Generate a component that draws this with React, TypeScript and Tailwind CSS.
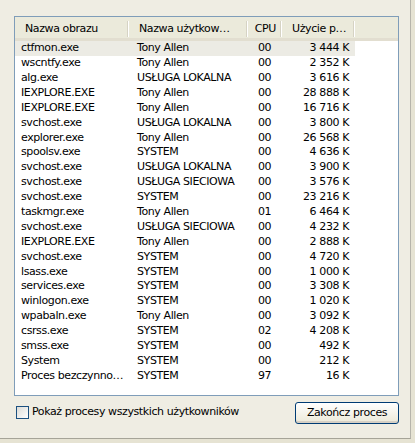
const rows: [string, string, string, string][] = [
  ['ctfmon.exe', 'Tony Allen', '00', '3 444 K'],
  ['wscntfy.exe', 'Tony Allen', '00', '2 352 K'],
  ['alg.exe', 'USŁUGA LOKALNA', '00', '3 616 K'],
  ['IEXPLORE.EXE', 'Tony Allen', '00', '28 888 K'],
  ['IEXPLORE.EXE', 'Tony Allen', '00', '16 716 K'],
  ['svchost.exe', 'USŁUGA LOKALNA', '00', '3 800 K'],
  ['explorer.exe', 'Tony Allen', '00', '26 568 K'],
  ['spoolsv.exe', 'SYSTEM', '00', '4 636 K'],
  ['svchost.exe', 'USŁUGA LOKALNA', '00', '3 900 K'],
  ['svchost.exe', 'USŁUGA SIECIOWA', '00', '3 576 K'],
  ['svchost.exe', 'SYSTEM', '00', '23 216 K'],
  ['taskmgr.exe', 'Tony Allen', '01', '6 464 K'],
  ['svchost.exe', 'USŁUGA SIECIOWA', '00', '4 232 K'],
  ['IEXPLORE.EXE', 'Tony Allen', '00', '2 888 K'],
  ['svchost.exe', 'SYSTEM', '00', '4 720 K'],
  ['lsass.exe', 'SYSTEM', '00', '1 000 K'],
  ['services.exe', 'SYSTEM', '00', '3 308 K'],
  ['winlogon.exe', 'SYSTEM', '00', '1 020 K'],
  ['wpabaln.exe', 'Tony Allen', '00', '3 092 K'],
  ['csrss.exe', 'SYSTEM', '02', '4 208 K'],
  ['smss.exe', 'SYSTEM', '00', '492 K'],
  ['System', 'SYSTEM', '00', '212 K'],
  ['Proces bezczynno…', 'SYSTEM', '97', '16 K'],
]

// Column widths shared by header and rows
const cols = ['w-[114px]', 'w-[119px]', 'w-[34px]', 'w-[73px]']

function HeaderCell({ label, width, align = 'left' }: { label: string; width: string; align?: 'left' | 'right' }) {
  return (
    <div className={`${width} relative flex h-full shrink-0 items-center pt-[3px]`}>
      <span className={`flex-1 truncate ${align === 'right' ? 'pr-[6px] text-right' : 'pl-[10px]'}`}>{label}</span>
      <div className="absolute right-0 top-[4px] h-[16px] w-[2px] border-l border-r border-l-[#d6d3c4] border-r-white" />
    </div>
  )
}

export default function App() {
  return (
    <div
      className="h-[443px] w-[415px] overflow-hidden bg-[#e6e3d3] text-[11px] text-black"
      style={{ fontFamily: '"DejaVu Sans", Verdana, sans-serif' }}
    >
      <div className="flex h-[439px] w-[411px] flex-col border-b border-r border-b-[#a6a498] border-r-[#b6b4aa] bg-[#efede3] pl-[14px] pt-[16px]">
        {/* Process list */}
        <div className="flex h-[380px] w-[385px] flex-col border border-[#7f9db9] bg-white">
          <div className="flex h-[24px] shrink-0 border-b-[3px] border-b-[#e2ded0] bg-[#ebeadb] tracking-[-0.4px]">
            <HeaderCell label="Nazwa obrazu" width={cols[0]} />
            <HeaderCell label="Nazwa użytkow…" width={cols[1]} />
            <HeaderCell label="CPU" width={cols[2]} align="right" />
            <HeaderCell label="Użycie p…" width={cols[3]} />
          </div>
          <div className="flex flex-col tracking-[-0.4px]">
            {rows.map(([name, user, cpu, mem], i) => (
              <div key={i} className={`flex h-[14.9px] w-[340px] items-center ${i === 0 ? 'bg-[#ecebe4]' : ''}`}>
                <span className={`${cols[0]} truncate pl-[6px]`}>{name}</span>
                <span className={`${cols[1]} truncate pl-[8px]`}>{user}</span>
                <span className={`${cols[2]} pl-[10px]`}>{cpu}</span>
                <span className={`${cols[3]} pr-[6px] text-right`}>{mem}</span>
              </div>
            ))}
          </div>
        </div>

        {/* Footer */}
        <div className="mt-[6px] flex w-[385px] items-start justify-between">
          <label className="mt-[2px] flex items-center gap-[3px] tracking-[-0.4px]">
            <span className="ml-[2px] h-[13px] w-[13px] border border-[#1c5180] bg-gradient-to-br from-[#dcdcd7] to-white" />
            <span>Pokaż procesy wszystkich użytkowników</span>
          </label>
          <button className="h-[22px] w-[104px] rounded-[3px] border border-[#003c74] bg-gradient-to-b from-white to-[#ece9d8] tracking-[-0.4px] shadow-[inset_0_-2px_0_#d6d0c5]">
            Zakończ proces
          </button>
        </div>
      </div>
    </div>
  )
}
